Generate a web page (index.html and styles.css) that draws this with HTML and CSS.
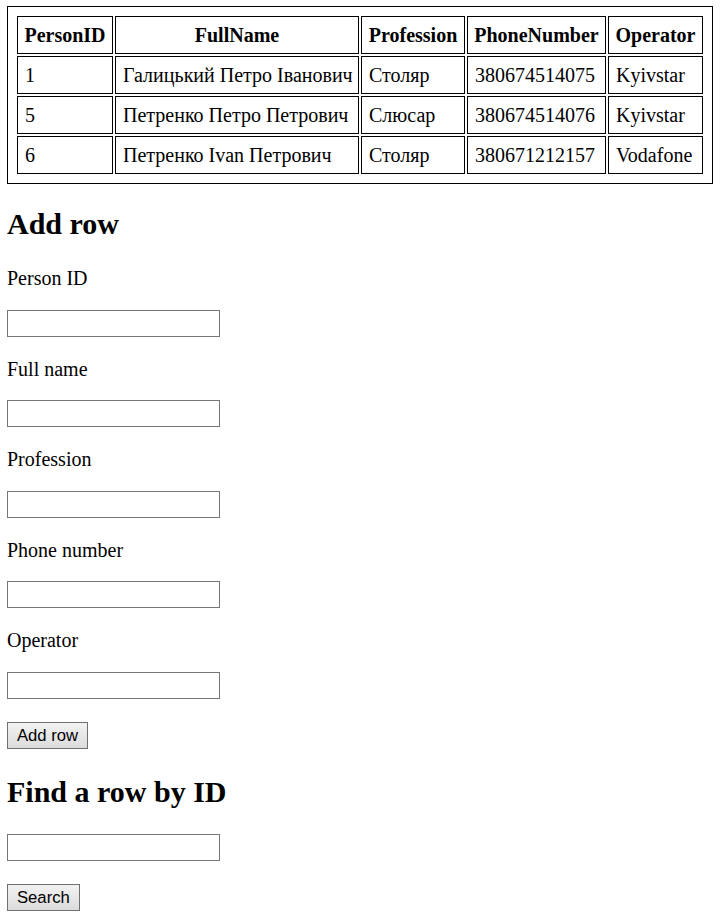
FILE: index.html
```html
<!DOCTYPE html>
<html lang="uk">
<head>
<meta charset="utf-8">
<title>Persons</title>
<link rel="stylesheet" href="styles.css">
</head>
<body>
<table class="people">
  <tr>
    <th class="c-id">PersonID</th>
    <th class="c-name">FullName</th>
    <th class="c-prof">Profession</th>
    <th class="c-phone">PhoneNumber</th>
    <th class="c-op">Operator</th>
  </tr>
  <tr>
    <td>1</td>
    <td>Галицький Петро Іванович</td>
    <td>Столяр</td>
    <td>380674514075</td>
    <td>Kyivstar</td>
  </tr>
  <tr>
    <td>5</td>
    <td>Петренко Петро Петрович</td>
    <td>Слюсар</td>
    <td>380674514076</td>
    <td>Kyivstar</td>
  </tr>
  <tr>
    <td>6</td>
    <td>Петренко Ivan Петрович</td>
    <td>Столяр</td>
    <td>380671212157</td>
    <td>Vodafone</td>
  </tr>
</table>

<h2 class="section-title first">Add row</h2>
<form class="add-form">
  <p class="field-label">Person ID</p>
  <input class="field" type="text">
  <p class="field-label">Full name</p>
  <input class="field" type="text">
  <p class="field-label">Profession</p>
  <input class="field" type="text">
  <p class="field-label">Phone number</p>
  <input class="field" type="text">
  <p class="field-label">Operator</p>
  <input class="field" type="text">
  <button class="btn" type="button">Add row</button>
</form>

<h2 class="section-title">Find a row by ID</h2>
<form class="find-form">
  <input class="field" type="text">
  <button class="btn" type="button">Search</button>
</form>
</body>
</html>
```
FILE: styles.css
```css
html {
  background: #fff;
}

body {
  margin: 6px 8px 8px 7px;
  font-family: "Liberation Serif", "Times New Roman", serif;
  font-size: 20px;
  color: #000;
}

.people {
  border: 1px solid #000;
  border-spacing: 2px;
  padding: 7px;
}

.people th,
.people td {
  border: 1px solid #000;
  padding: 6px;
  line-height: 24px;
  white-space: nowrap;
}

.people .c-id { width: 82px; }
.people .c-name { width: 230px; }
.people .c-prof { width: 90px; }
.people .c-phone { width: 125px; }
.people .c-op { width: 81px; }

.people th {
  font-weight: bold;
  text-align: center;
}

.people td {
  text-align: left;
  padding-left: 7px;
  padding-right: 5px;
}

.section-title {
  font-size: 30px;
  font-weight: bold;
  line-height: 35px;
  margin: 25px 0;
}

.section-title.first {
  margin-top: 22px;
}

.add-form,
.find-form {
  margin: 0;
}

.field-label {
  margin: 20px 0 19px;
  padding-top: 1px;
  line-height: 23.5px;
}

.field {
  display: block;
  box-sizing: border-box;
  width: 213px;
  height: 27px;
  margin: 0;
  padding: 1px 3px;
  border: 1px solid #767676;
  border-radius: 0;
  background: #fff;
  font-family: "Liberation Sans", Arial, sans-serif;
  font-size: 16.67px;
}

.btn {
  display: block;
  box-sizing: border-box;
  height: 27px;
  margin: 23px 0 0;
  padding: 0 9px;
  border: 1px solid #707070;
  border-radius: 0;
  background: linear-gradient(#f2f2f2, #dcdcdc);
  font-family: "Liberation Sans", Arial, sans-serif;
  font-size: 16.67px;
  color: #000;
  line-height: 25px;
}
```
